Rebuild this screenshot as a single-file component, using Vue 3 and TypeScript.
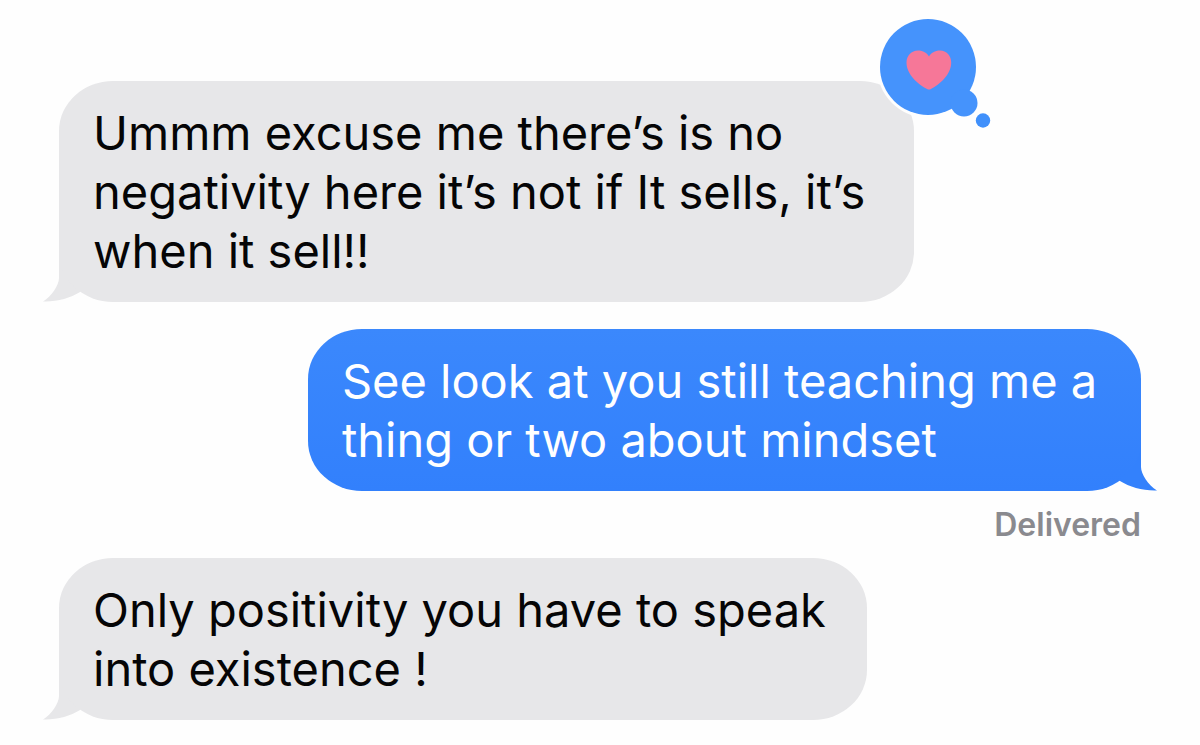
<script setup lang="ts">
interface Message {
  id: number
  side: 'received' | 'sent'
  size: 'wide' | 'medium' | 'narrow'
  lines: string[]
  loved?: boolean
  status?: string
}

const messages: Message[] = [
  {
    id: 1,
    side: 'received',
    size: 'wide',
    lines: ['Ummm excuse me there’s is no', 'negativity here it’s not if It sells, it’s', 'when it sell!!'],
    loved: true,
  },
  {
    id: 2,
    side: 'sent',
    size: 'medium',
    lines: ['See look at you still teaching me a', 'thing or two about mindset'],
    status: 'Delivered',
  },
  {
    id: 3,
    side: 'received',
    size: 'narrow',
    lines: ['Only positivity you have to speak', 'into existence !'],
  },
]
</script>

<template>
  <main class="thread">
    <article v-for="m in messages" :key="m.id" class="row" :class="m.side">
      <div class="bubble" :class="m.size">
        <svg class="tail" viewBox="0 0 52 54" aria-hidden="true">
          <path d="M16 0V30C16 37 9 48 0 53.5C14 54 27 50 37 44L52 30V0Z" />
        </svg>
        <p class="text">
          <span v-for="line in m.lines" :key="line" class="line">{{ line }}</span>
        </p>
        <svg v-if="m.loved" class="reaction" viewBox="0 0 114 114" role="img" aria-label="Loved">
          <circle cx="51" cy="51" r="51" fill="#fefefe" />
          <circle cx="51" cy="51" r="48" fill="#4593fc" />
          <circle cx="87" cy="87" r="13.5" fill="#4593fc" />
          <circle cx="106" cy="104.5" r="7.2" fill="#4090fb" />
          <path
            fill="#f67798"
            d="M50.5 73.2C41 68.5 29.5 58.5 29.5 46.5C29.5 39.5 34.5 34.5 41 34.5C46 34.5 50 37 52 40.5C54 37 58 34.5 63 34.5C69.5 34.5 74.2 39.5 74.2 46.5C74.2 58.5 63 68.5 53.5 73.2Q52 74 50.5 73.2Z"
          />
        </svg>
      </div>
      <small v-if="m.status" class="status">{{ m.status }}</small>
    </article>
  </main>
</template>

<style>
body {
  margin: 0;
  background: #fefefe;
}
</style>

<style scoped>
.thread {
  box-sizing: border-box;
  padding: 81px 59px 0;
  font-family: Inter, "Liberation Sans", sans-serif;
}

.row {
  display: flex;
  flex-direction: column;
  align-items: flex-start;
  margin-bottom: 27px;
}

.row.sent {
  align-items: flex-end;
  gap: 18px;
  margin-bottom: 17px;
}

.row:last-child {
  margin-bottom: 24px;
}

.bubble {
  position: relative;
  box-sizing: border-box;
  padding: 22px 34px;
  border-radius: 54px / 50px;
  background: #e7e7e9;
  color: #050506;
}

.wide {
  width: 79%;
}

.medium {
  width: 77%;
}

.narrow {
  width: 74.7%;
}

.sent .bubble {
  background: linear-gradient(#3b88fc, #3280fc);
  color: #fff;
}

.text {
  margin: 0;
  font-size: 47px;
  line-height: 59px;
}

.line {
  display: block;
  white-space: nowrap;
}

.tail {
  position: absolute;
  bottom: 0;
  left: -16px;
  z-index: -1;
  width: 52px;
  height: 54px;
  fill: #e7e7e9;
}

.sent .tail {
  right: -16px;
  left: auto;
  fill: #3381fc;
  transform: scaleX(-1);
}

.reaction {
  position: absolute;
  top: -65px;
  right: -77px;
  width: 114px;
  height: 114px;
}

.status {
  color: #8a8a8f;
  font-size: 32px;
  font-weight: 600;
  line-height: 32px;
}
</style>
